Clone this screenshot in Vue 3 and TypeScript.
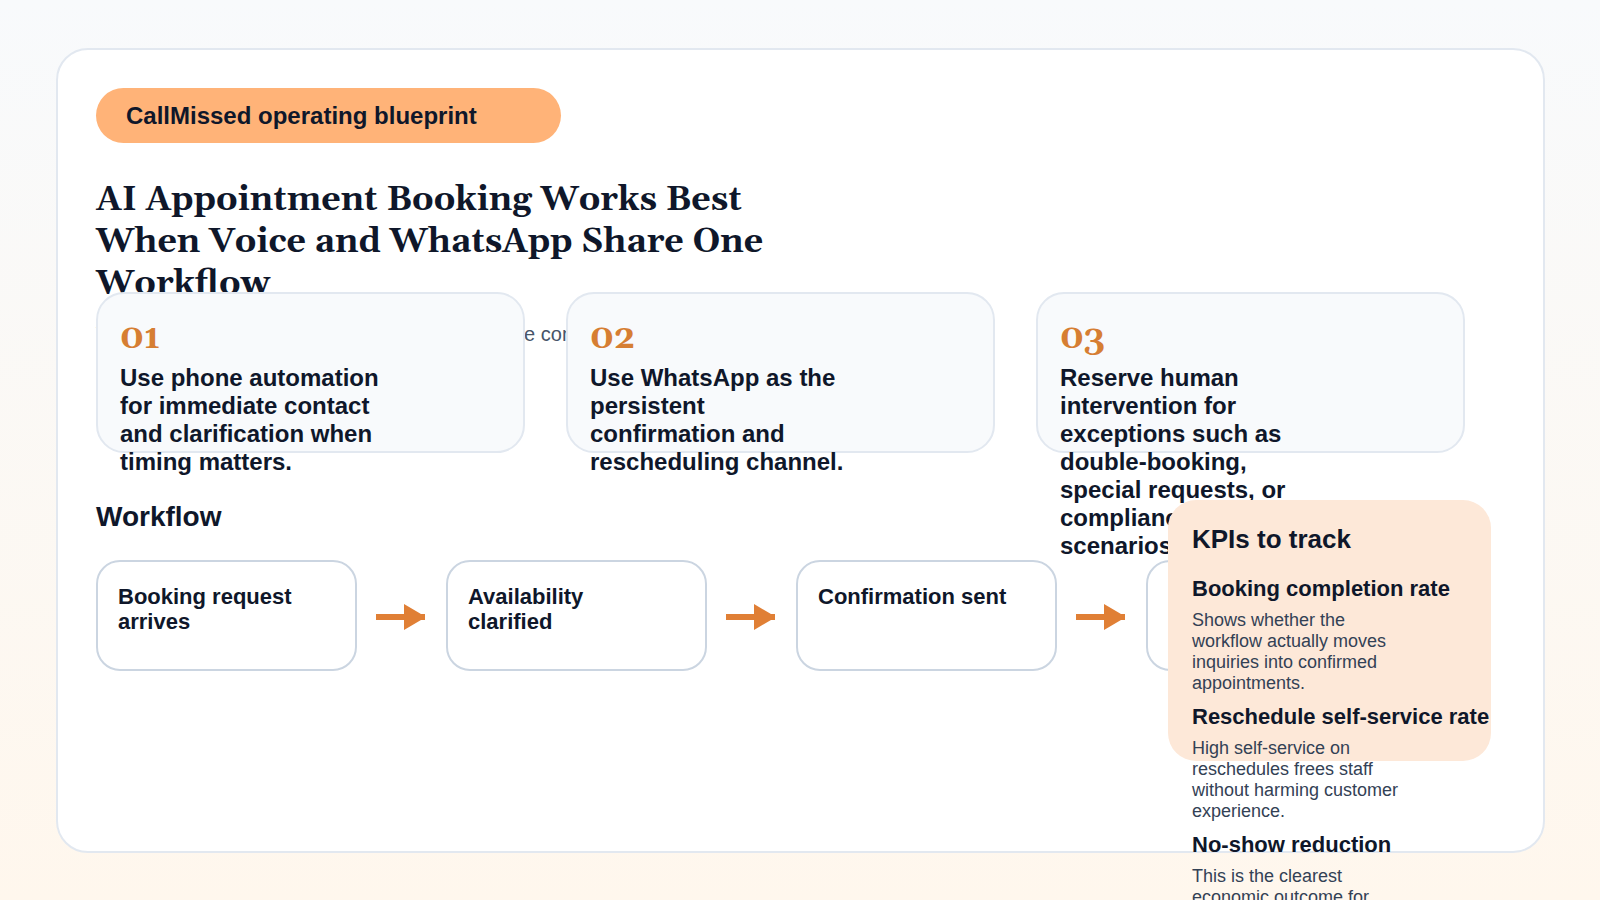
<script setup lang="ts">
interface Kpi {
  title: string
  lines: string[]
}

const cards = [
  { num: '01', text: 'Use phone automation for immediate contact and clarification when timing matters.' },
  { num: '02', text: 'Use WhatsApp as the persistent confirmation and rescheduling channel.' },
  { num: '03', text: 'Reserve human intervention for exceptions such as double-booking, special requests, or compliance-sensitive scenarios.' }
]

const steps = ['Booking request arrives', 'Availability clarified', 'Confirmation sent', 'Reminder scheduled']

const kpis: Kpi[] = [
  {
    title: 'Booking completion rate',
    lines: ['Shows whether the', 'workflow actually moves', 'inquiries into confirmed', 'appointments.']
  },
  {
    title: 'Reschedule self-service rate',
    lines: ['High self-service on', 'reschedules frees staff', 'without harming customer', 'experience.']
  },
  {
    title: 'No-show reduction',
    lines: ['This is the clearest', 'economic outcome for', 'appointment businesses.']
  }
]
</script>

<template>
  <div class="page">
    <div class="slide">
      <div class="header">
        <div class="pill">CallMissed operating blueprint</div>
        <h1 class="title">AI Appointment Booking Works Best When Voice and WhatsApp Share One Workflow</h1>
        <p class="subtitle">Voice captures urgency and WhatsApp keeps the context</p>
      </div>

      <div class="cards">
        <div v-for="card in cards" :key="card.num" class="card">
          <div class="card-num">{{ card.num }}</div>
          <div class="card-text">{{ card.text }}</div>
        </div>
      </div>

      <h2 class="section-title">Workflow</h2>
      <div class="flow">
        <template v-for="(step, i) in steps" :key="step">
          <div class="step"><span class="step-text">{{ step }}</span></div>
          <svg v-if="i < steps.length - 1" class="arrow" width="49" height="26" viewBox="0 0 49 26">
            <path d="M0 10h28V0l17 10h4v6h-4L28 26V16H0z" fill="#e07f35" />
          </svg>
        </template>
      </div>

      <div class="kpi-panel">
        <h3 class="kpi-heading">KPIs to track</h3>
        <div v-for="kpi in kpis" :key="kpi.title" class="kpi">
          <div class="kpi-title">{{ kpi.title }}</div>
          <p class="kpi-desc">
            <span v-for="line in kpi.lines" :key="line" class="kpi-line">{{ line }}</span>
          </p>
        </div>
      </div>
    </div>
  </div>
</template>

<style>
html,
body {
  margin: 0;
  height: 100%;
  overflow: hidden;
}
</style>

<style scoped>
.page {
  box-sizing: border-box;
  width: 1600px;
  height: 900px;
  padding: 48px 55px 47px 56px;
  overflow: hidden;
  background: linear-gradient(180deg, #f8fafc 0%, #fff7ed 100%);
  font-family: 'Liberation Sans', Arial, sans-serif;
  color: #0f172a;
}

.slide {
  position: relative;
  box-sizing: border-box;
  height: 805px;
  padding: 38px;
  background: #fff;
  border: 2px solid #e2e8f0;
  border-radius: 32px;
}

.header {
  height: 204px;
}

.pill {
  box-sizing: border-box;
  width: 465px;
  height: 55px;
  padding: 0 30px;
  background: #ffb378;
  border-radius: 28px;
  font-size: 24px;
  font-weight: 700;
  line-height: 55px;
}

.title {
  width: 720px;
  margin: 36px 0 0;
  font-family: Gelasio, Georgia, 'Liberation Serif', serif;
  font-size: 34px;
  font-weight: 700;
  line-height: 42px;
}

.subtitle {
  margin: 17px 0 0;
  font-size: 20px;
  letter-spacing: 0.05px;
  line-height: 24px;
  color: #475569;
  white-space: nowrap;
}

.cards {
  display: grid;
  grid-template-columns: repeat(3, 429px);
  gap: 41px;
}

.card {
  position: relative;
  box-sizing: border-box;
  height: 161px;
  padding: 25px 22px 24px;
  background: #f8fafc;
  border: 2px solid #e2e8f0;
  border-radius: 28px;
}

.card-num {
  font-family: Gelasio, Georgia, 'Liberation Serif', serif;
  font-size: 34px;
  font-weight: 700;
  line-height: 38px;
  color: #d67e33;
}

.card-text {
  width: 260px;
  margin-top: 7px;
  font-size: 24px;
  font-weight: 700;
  line-height: 28px;
}

.section-title {
  margin: 46px 0 0;
  font-size: 28px;
  font-weight: 700;
  line-height: 36px;
}

.flow {
  display: flex;
  align-items: center;
  margin-top: 25px;
}

.step {
  box-sizing: border-box;
  flex: none;
  width: 261px;
  height: 111px;
  padding: 22px 20px;
  border: 2px solid #cbd5e1;
  border-radius: 24px;
  font-size: 22px;
  font-weight: 700;
  line-height: 1.15;
}

.step-text {
  display: block;
  max-width: 200px;
}

.arrow {
  flex: none;
  margin: 3px 21px 0 19px;
}

.kpi-panel {
  position: absolute;
  top: 450px;
  right: 52px;
  box-sizing: border-box;
  width: 323px;
  height: 261px;
  padding: 24px;
  background: #fde8d8;
  border-radius: 28px;
}

.kpi-heading {
  margin: 0 0 22px;
  font-size: 26px;
  font-weight: 700;
  line-height: 30px;
}

.kpi {
  margin-bottom: 10px;
}

.kpi-title {
  font-size: 22px;
  font-weight: 700;
  line-height: 26px;
  white-space: nowrap;
}

.kpi-desc {
  margin: 8px 0 0;
  font-size: 18px;
  line-height: 21px;
  color: #334155;
}

.kpi-line {
  display: block;
  white-space: nowrap;
}
</style>
